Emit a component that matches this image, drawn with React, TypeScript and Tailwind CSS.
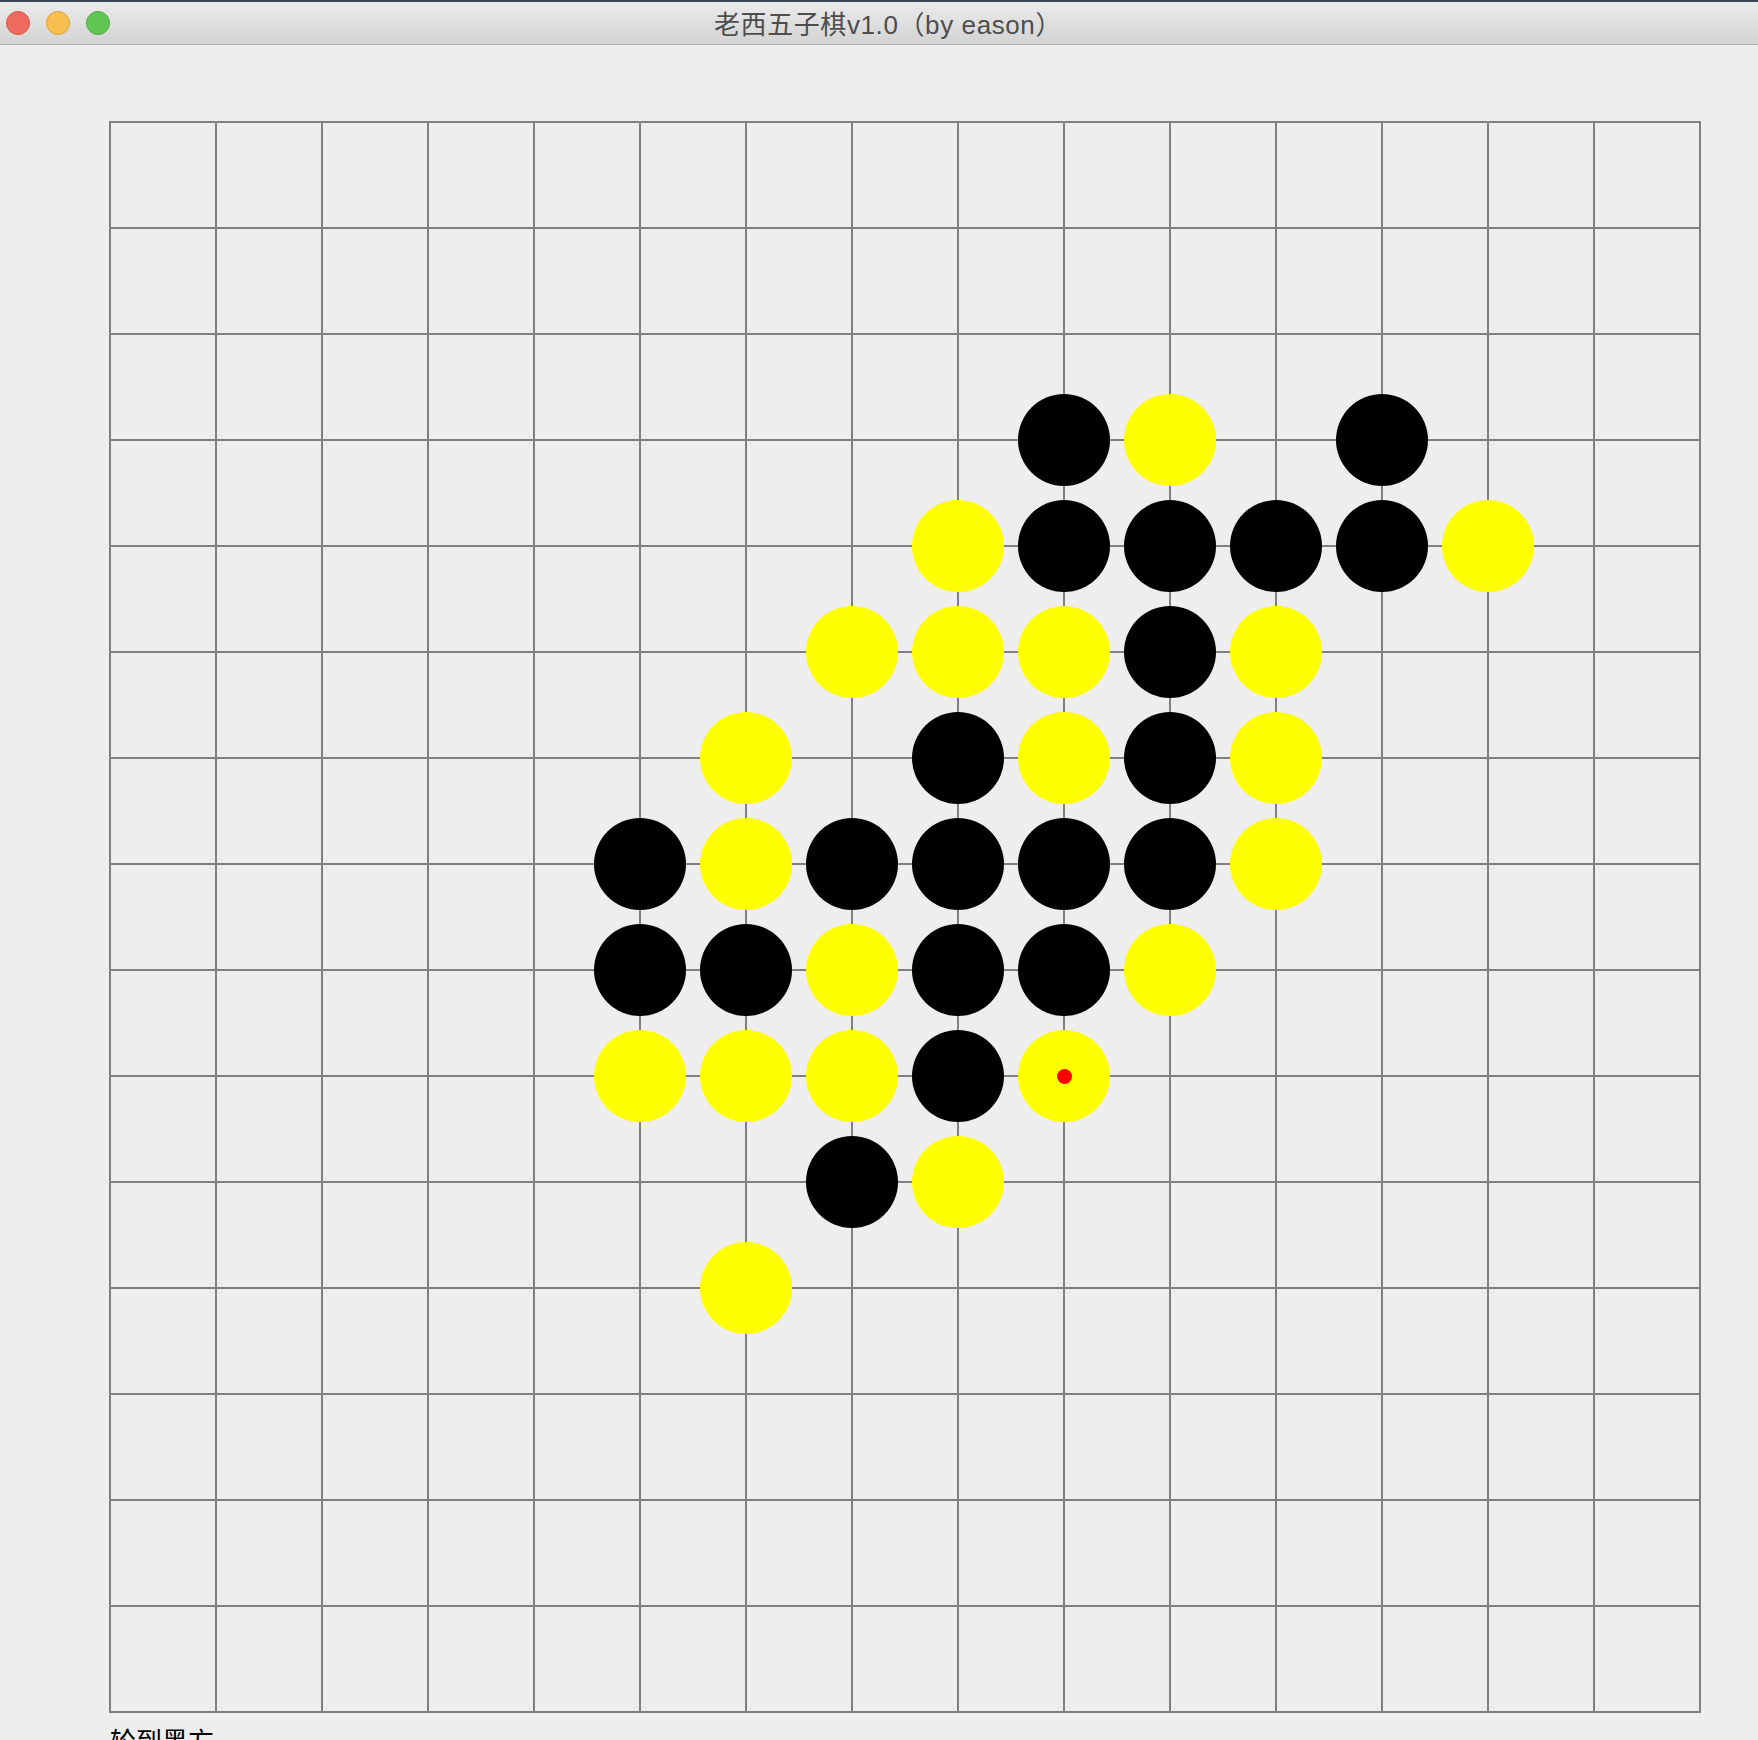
import React from "react";

type Stone = { r: number; c: number; black: boolean };

const BLACK: [number, number][] = [
    [3, 9], [3, 12],
    [4, 9], [4, 10], [4, 11], [4, 12],
    [5, 10],
    [6, 8], [6, 10],
    [7, 5], [7, 7], [7, 8], [7, 9], [7, 10],
    [8, 5], [8, 6], [8, 8], [8, 9],
    [9, 8],
    [10, 7],
];

const YELLOW: [number, number][] = [
    [3, 10],
    [4, 8], [4, 13],
    [5, 7], [5, 8], [5, 9], [5, 11],
    [6, 6], [6, 9], [6, 11],
    [7, 6], [7, 11],
    [8, 7], [8, 10],
    [9, 5], [9, 6], [9, 7], [9, 9],
    [10, 8],
    [11, 6],
];

const stones: Stone[] = [
    ...BLACK.map(([r, c]) => ({ r, c, black: true })),
    ...YELLOW.map(([r, c]) => ({ r, c, black: false })),
];

// last move gets the red marker
const last = { r: 9, c: 9 };

const CELL = 106;

function TitleBar() {
    return (
        <div className="w-full">
            <div className="h-[2px] bg-[#3a4656]" />
            <div className="h-[43px] grid grid-cols-[1fr_auto_1fr] items-center bg-gradient-to-b from-[#ebebeb] to-[#d3d3d3] border-b border-[#b3b3b3]">
                <div className="flex items-center gap-[16px] pl-[6px]">
                    <span className="w-[24px] h-[24px] rounded-full bg-[#ee6a5f] border border-[#d5564b]" />
                    <span className="w-[24px] h-[24px] rounded-full bg-[#f6bf50] border border-[#dea23b]" />
                    <span className="w-[24px] h-[24px] rounded-full bg-[#61c554] border border-[#50aa42]" />
                </div>
                <div className="pt-[3px] pl-[18px] text-[26px] leading-none tracking-[0.6px] text-[#4d4d4d] font-['Liberation_Sans','Noto_Sans_CJK_SC',sans-serif]">
                    老西五子棋v1.0（by eason）
                </div>
                <div />
            </div>
        </div>
    );
}

function Board() {
    return (
        <div className="relative w-[1592px] border-l-2 border-t-2 border-[#808080] grid grid-cols-[repeat(15,106px)]">
            {Array.from({ length: 225 }).map((_, i) => (
                <div
                    key={i}
                    className="h-[106px] border-r-2 border-b-2 border-[#808080]"
                />
            ))}
            {stones.map((s) => (
                <div
                    key={`${s.r}-${s.c}`}
                    className={`absolute w-[92px] h-[92px] rounded-full flex items-center justify-center ${
                        s.black ? "bg-black" : "bg-[#ffff00]"
                    }`}
                    style={{ left: CELL * s.c - 47, top: CELL * s.r - 47 }}
                >
                    {s.r === last.r && s.c === last.c && (
                        <span className="w-[15px] h-[15px] rounded-full bg-[#ff0000]" />
                    )}
                </div>
            ))}
        </div>
    );
}

export default function App() {
    return (
        <div className="w-[1758px] h-[1740px] overflow-hidden bg-[#eeeeee]">
            <TitleBar />
            <div className="pl-[109px] pt-[76px]">
                <Board />
                <p className="mt-[14px] ml-[1px] text-[26px] leading-none text-black font-['Noto_Sans_CJK_SC',sans-serif]">
                    轮到黑方
                </p>
            </div>
        </div>
    );
}
